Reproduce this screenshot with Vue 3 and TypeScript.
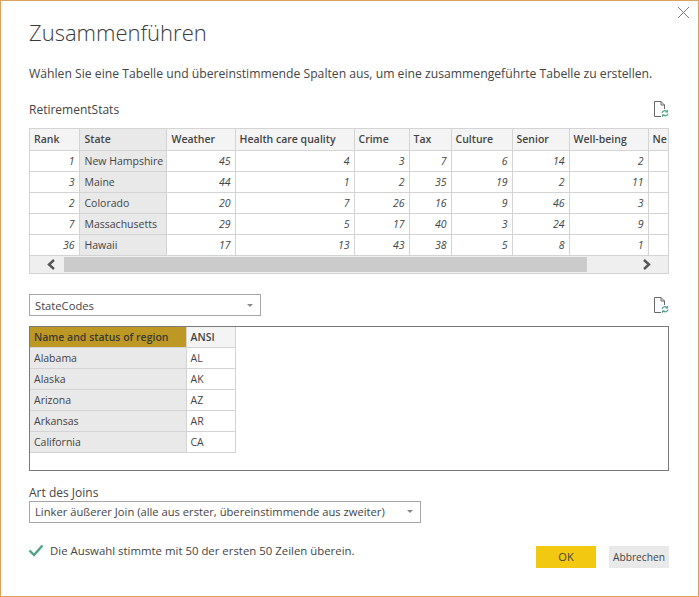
<template>
  <div class="dialog">
    <button class="close" aria-label="Schließen">
      <svg width="13" height="13" viewBox="0 0 13 13"><path d="M1 1l11 11M12 1L1 12" stroke="#777" stroke-width="1" fill="none" /></svg>
    </button>
    <h1>Zusammenführen</h1>
    <p class="intro">Wählen Sie eine Tabelle und übereinstimmende Spalten aus, um eine zusammengeführte Tabelle zu erstellen.</p>

    <div class="source-row first">
      <span class="source-name">RetirementStats</span>
      <svg class="file-icon" width="15" height="17" viewBox="0 0 15 17">
        <path d="M7 15.500H.5V.5H7L10.500 4V8M7 .5V4h3.500" fill="none" stroke="#666" />
        <path d="M8 12a2.800 2.800 0 0 1 4.800-1.400M14 12.500a2.800 2.800 0 0 1-4.800 1.400" fill="none" stroke="#4fa384" stroke-width="1.200" />
        <path d="M14 8.500v3h-3zM8 16.500v-3h3z" fill="#4fa384" />
      </svg>
    </div>
    <div class="grid-wrap">
      <table class="grid stats">
        <thead>
          <tr>
            <th v-for="col in statColumns" :key="col" :class="{ key: col === 'State' }">{{ col }}</th>
          </tr>
        </thead>
        <tbody>
          <tr v-for="row in statRows" :key="row.state">
            <td class="num">{{ row.rank }}</td>
            <td class="key">{{ row.state }}</td>
            <td v-for="(v, i) in row.values" :key="i" class="num">{{ v }}</td>
            <td></td>
          </tr>
        </tbody>
      </table>
      <div class="scrollbar">
        <svg class="arrow left" width="26" height="11" viewBox="0 0 10 11"><path d="M8 1L3 5.500 8 10" fill="none" stroke="#555" stroke-width="2.400" /></svg>
        <div class="thumb"></div>
        <svg class="arrow right" width="26" height="11" viewBox="0 0 10 11"><path d="M2 1l5 4.500L2 10" fill="none" stroke="#555" stroke-width="2.400" /></svg>
      </div>
    </div>

    <div class="source-row second">
      <div class="select small">
        <span>StateCodes</span>
        <i class="caret"></i>
      </div>
      <svg class="file-icon" width="15" height="17" viewBox="0 0 15 17">
        <path d="M7 15.500H.5V.5H7L10.500 4V8M7 .5V4h3.500" fill="none" stroke="#666" />
        <path d="M8 12a2.800 2.800 0 0 1 4.800-1.400M14 12.500a2.800 2.800 0 0 1-4.800 1.400" fill="none" stroke="#4fa384" stroke-width="1.200" />
        <path d="M14 8.500v3h-3zM8 16.500v-3h3z" fill="#4fa384" />
      </svg>
    </div>
    <div class="codes-box">
      <table class="grid codes">
        <thead>
          <tr>
            <th class="selected">Name and status of region</th>
            <th>ANSI</th>
          </tr>
        </thead>
        <tbody>
          <tr v-for="row in codeRows" :key="row[1]">
            <td class="key">{{ row[0] }}</td>
            <td>{{ row[1] }}</td>
          </tr>
        </tbody>
      </table>
    </div>

    <label class="join-label">Art des Joins</label>
    <div class="select wide">
      <span>Linker äußerer Join (alle aus erster, übereinstimmende aus zweiter)</span>
      <i class="caret"></i>
    </div>

    <div class="footer">
      <div class="status">
        <svg class="check" width="16" height="13" viewBox="0 0 16 13"><path d="M1.500 6.500L6 11 14.500 1.500" fill="none" stroke="#4fa384" stroke-width="2.400" /></svg>
        <span>Die Auswahl stimmte mit 50 der ersten 50 Zeilen überein.</span>
      </div>
      <div class="buttons">
        <button class="btn primary">OK</button>
        <button class="btn">Abbrechen</button>
      </div>
    </div>
  </div>
</template>

<script setup lang="ts">
const statColumns = ['Rank', 'State', 'Weather', 'Health care quality', 'Crime', 'Tax', 'Culture', 'Senior', 'Well-being', 'Ne']

const statRows = [
  { rank: 1, state: 'New Hampshire', values: [45, 4, 3, 7, 6, 14, 2] },
  { rank: 3, state: 'Maine', values: [44, 1, 2, 35, 19, 2, 11] },
  { rank: 2, state: 'Colorado', values: [20, 7, 26, 16, 9, 46, 3] },
  { rank: 7, state: 'Massachusetts', values: [29, 5, 17, 40, 3, 24, 9] },
  { rank: 36, state: 'Hawaii', values: [17, 13, 43, 38, 5, 8, 1] },
]

const codeRows = [
  ['Alabama', 'AL'],
  ['Alaska', 'AK'],
  ['Arizona', 'AZ'],
  ['Arkansas', 'AR'],
  ['California', 'CA'],
]
</script>

<style>
html,
body {
  margin: 0;
  background: #fff;
}
</style>

<style scoped>
.dialog {
  position: relative;
  box-sizing: border-box;
  width: 699px;
  height: 597px;
  padding: 0 28px;
  border: 1px solid #d9a35f;
  background: #fff;
  color: #444;
  font-family: "Open Sans", "Noto Sans", sans-serif;
  font-size: 12px;
  overflow: hidden;
}

.close {
  position: absolute;
  top: 5px;
  right: 8px;
  padding: 0;
  border: 0;
  background: none;
  line-height: 0;
}

h1 {
  margin: 15px 0 0;
  font-size: 22px;
  line-height: 32px;
  font-weight: 300;
  color: #3a3a3a;
}

.intro {
  margin: 17px 0 0;
  font-size: 12.2px;
  line-height: 18px;
  color: #444;
  white-space: nowrap;
}

.source-row {
  display: flex;
  align-items: center;
  justify-content: space-between;
  width: 640px;
}

.source-row.first {
  height: 20px;
  margin-top: 16px;
}

.source-row.second {
  margin-top: 20px;
  height: 23px;
}

.source-name {
  font-size: 12px;
  color: #444;
}

.grid-wrap {
  width: 640px;
  margin-top: 9px;
  border: 1px solid #d4d4d4;
  box-sizing: border-box;
  overflow: hidden;
}

.grid {
  border-collapse: collapse;
  table-layout: fixed;
  font-size: 10.5px;
}

.grid th,
.grid td {
  box-sizing: border-box;
  height: 21px;
  padding: 0 4px;
  border: 1px solid #d4d4d4;
  white-space: nowrap;
  overflow: hidden;
  text-align: left;
  color: #444;
}

.grid th {
  background: #f4f4f4;
  font-weight: 600;
}

.grid tr > :first-child {
  border-left: 0;
}

.grid thead th {
  border-top: 0;
}

.grid th.key,
.grid td.key {
  background: #e9e9e9;
  padding-left: 5px;
}

.grid td.num {
  text-align: right;
  font-style: italic;
}

.stats {
  width: 638px;
}

.stats th:nth-child(1) { width: 49px; }
.stats th:nth-child(2) { width: 87px; }
.stats th:nth-child(3) { width: 69px; padding-left: 5px; }
.stats th:nth-child(4) { width: 119px; }
.stats th:nth-child(5) { width: 55px; }
.stats th:nth-child(6) { width: 42px; }
.stats th:nth-child(7) { width: 61px; }
.stats th:nth-child(8) { width: 57px; }
.stats th:nth-child(9) { width: 79px; }
.stats th:nth-child(10) { width: 20px; }

.stats tr > :last-child {
  border-right: 0;
}

.scrollbar {
  display: flex;
  align-items: center;
  height: 17px;
  background: #efefef;
}

.arrow {
  flex: none;
}

.arrow.left {
  margin-left: 8px;
}

.arrow.right {
  margin-left: 47px;
}

.thumb {
  width: 523px;
  height: 15px;
  background: #cbcbcb;
}

.select {
  display: flex;
  align-items: center;
  justify-content: space-between;
  box-sizing: border-box;
  height: 22px;
  padding: 0 7px 0 5px;
  border: 1px solid #a6a6a6;
  font-size: 11.2px;
  white-space: nowrap;
  color: #444;
}

.select.small {
  width: 232px;
}

.select.wide {
  width: 392px;
}

.caret {
  width: 0;
  height: 0;
  border-left: 3px solid transparent;
  border-right: 3px solid transparent;
  border-top: 3px solid #888;
}

.codes-box {
  box-sizing: border-box;
  width: 640px;
  height: 145px;
  margin-top: 9px;
  border: 1px solid #7a7a7a;
}

.codes {
  width: 205px;
}

.codes th:nth-child(1) { width: 156px; }
.codes th:nth-child(2) { width: 49px; }

.codes td.key {
  padding-left: 4px;
}

.grid th.selected {
  background: #bd9825;
  color: #3c3a30;
}

.join-label {
  display: block;
  margin-top: 14px;
  font-size: 12px;
  line-height: 16px;
  color: #444;
}

.footer {
  display: flex;
  justify-content: space-between;
  width: 640px;
  margin-top: 18px;
}

.status {
  display: flex;
  align-items: center;
  gap: 6px;
  height: 20px;
  font-size: 11.4px;
  color: #444;
}

.check {
  margin-left: -1px;
}

.buttons {
  display: flex;
  gap: 13px;
  margin-top: 5px;
}

.btn {
  width: 60px;
  height: 22px;
  padding: 0;
  border: 0;
  background: #e9e9e9;
  font-family: inherit;
  font-size: 10.2px;
  color: #444;
}

.btn.primary {
  background: #f2c811;
  font-size: 11px;
}
</style>
